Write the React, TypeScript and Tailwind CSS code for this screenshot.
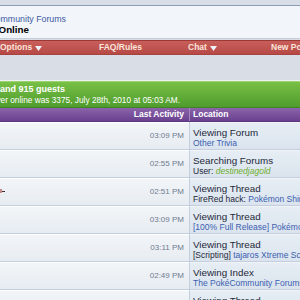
import React from "react";

type Row = {
  time: string;
  title: string;
  sub: React.ReactNode;
  mark?: boolean;
};

const link = "text-[#3b5eb0]";
const dark = "text-[#1e2838]";

const rows: Row[] = [
  {
    time: "03:09 PM",
    title: "Viewing Forum",
    sub: <span className={link}>Other Trivia</span>,
  },
  {
    time: "02:55 PM",
    title: "Searching Forums",
    sub: (
      <>
        <span className={dark}>User:&nbsp;</span>
        <span className="italic text-[#6fae2c]">destinedjagold</span>
      </>
    ),
  },
  {
    time: "02:51 PM",
    title: "Viewing Thread",
    mark: true,
    sub: (
      <>
        <span className={dark}>FireRed hack:&nbsp;</span>
        <span className={link}>Pokémon Shining Gold</span>
      </>
    ),
  },
  {
    time: "03:09 PM",
    title: "Viewing Thread",
    sub: <span className={link}>[100% Full Release] Pokémon Dark Rising</span>,
  },
  {
    time: "03:11 PM",
    title: "Viewing Thread",
    sub: (
      <>
        <span className={dark}>[Scripting]&nbsp;</span>
        <span className={link}>tajaros Xtreme Scripting Tutorial</span>
      </>
    ),
  },
  {
    time: "02:49 PM",
    title: "Viewing Index",
    sub: <span className={link}>The PokéCommunity Forums</span>,
  },
  {
    time: "02:58 PM",
    title: "Viewing Thread",
    sub: <span className={link}>Pokémon Insurgence</span>,
  },
];

const NavItem: React.FC<{ label: string; arrow?: boolean; className?: string }> = ({
  label,
  arrow,
  className,
}) => (
  <div className={`shrink-0 flex items-center gap-[3px] ${className ?? ""}`}>
    <span>{label}</span>
    {arrow && (
      <svg width="7" height="5" viewBox="0 0 7 5" className="mt-[1px]">
        <path d="M0 0h7L3.5 5z" fill="#eef3fb" />
      </svg>
    )}
  </div>
);

export default function App() {
  return (
    <div className="w-[300px] h-[300px] overflow-hidden bg-[#d9dde5] font-['Liberation_Sans',Arial,sans-serif] whitespace-nowrap">
      <div className="h-[5px]" />

      {/* header panel */}
      <div className="h-[34px] border-t border-[#8d9db6] border-b border-b-[#c4ccd8] bg-[#f2f5f9] flex flex-col pt-[8px]">
        <div className="flex justify-end w-[66px] h-[11px] items-center text-[8.8px] text-[#3d5ba3]">
          The PokéCommunity Forums
        </div>
        <div className="flex justify-end w-[29px] h-[11px] items-center text-[9.8px] font-bold text-black">
          Who&apos;s Online
        </div>
      </div>

      {/* nav bar */}
      <div className="mt-[1px] h-[15px] border-t border-[#9a3835] border-b border-b-[#a6423f] bg-gradient-to-b from-[#c95f5a] to-[#b64946] flex items-center text-[8.5px] font-bold text-[#fbe4da]">
        <NavItem label="Options" arrow className="w-[99px]" />
        <NavItem label="FAQ/Rules" className="w-[89px]" />
        <NavItem label="Chat" arrow className="w-[83px]" />
        <NavItem label="New Posts" />
      </div>

      <div className="h-[26px] border-b border-[#eef1f5]" />

      {/* green who's online */}
      <div className="h-[27px] border-t border-[#9ad36f] bg-gradient-to-b from-[#78c046] to-[#4f9c2d] border-b border-b-[#3f8524] flex flex-col pt-[3px] text-white">
        <div className="flex justify-end w-[65px] h-[10px] items-center text-[9px] font-bold">
          Currently Active Users: 1004 members and 915 guests
        </div>
        <div className="flex justify-end w-[180px] h-[10px] items-center text-[8.3px]">
          Most users ever online was 3375, July 28th, 2010 at 05:03 AM.
        </div>
      </div>

      {/* purple table header */}
      <div className="h-[14px] bg-gradient-to-b from-[#8b64ab] to-[#6a418e] border-b border-[#5b3580] flex items-stretch text-[8.5px] font-bold text-white">
        <div className="shrink-0 w-[189px] flex items-center justify-end pr-[5px]">Last Activity</div>
        <div className="shrink-0 w-px bg-[#a387bd]" />
        <div className="flex items-center pl-[3px]">Location</div>
      </div>

      {/* rows */}
      {rows.map((r, i) => (
        <div key={i} className="h-[28px] flex border-b border-[#c3cfdd]">
          <div className="relative shrink-0 w-[189px] bg-gradient-to-b from-[#f2f5f8] to-[#e7ecf2] flex items-center justify-end pr-[5px] text-[8px] text-[#6e7b90] border-t border-white">
            {r.mark && (
              <span className="absolute left-0 top-[10px] flex items-center">
                <span className="w-[2px] h-[4px] bg-[#c48a8a]" />
                <span className="w-[3px] h-px bg-[#3a2a2a]" />
              </span>
            )}
            {r.time}
          </div>
          <div className="shrink-0 w-px bg-[#c3cfdd]" />
          <div className="flex-1 min-w-0 overflow-hidden bg-gradient-to-b from-[#e6edf4] to-[#dbe4ee] flex flex-col pl-[3px] pt-[5px] border-t border-[#f0f4f8]">
            <div className="h-[10px] flex items-center text-[9.8px] text-[#1e2838]">{r.title}</div>
            <div className="h-[11px] flex items-center text-[8.5px]">{r.sub}</div>
          </div>
        </div>
      ))}
    </div>
  );
}
